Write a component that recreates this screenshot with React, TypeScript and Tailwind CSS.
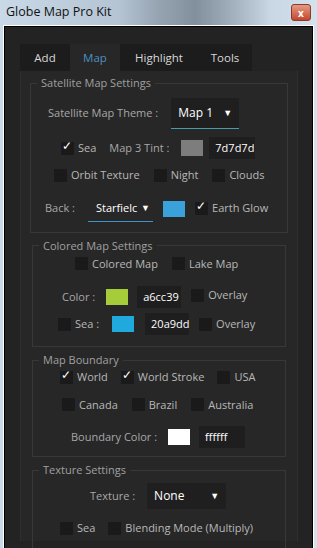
import React from "react";

const font = { fontFamily: '"Open Sans", "Noto Sans", sans-serif' };

function Check({ on = false }: { on?: boolean }) {
    return (
        <span className="relative inline-flex h-[13px] w-[13px] shrink-0 items-center justify-center bg-[#1a1a1a]">
            {on && <span className="absolute -top-[2px] left-[1px] text-[12px] leading-none text-white">✓</span>}
        </span>
    );
}

function Item({ on, label, className = "" }: { on?: boolean; label: string; className?: string }) {
    return (
        <span className={`flex items-center gap-[4px] ${className}`}>
            <Check on={on} />
            <span className="text-[#b8b8b8]">{label}</span>
        </span>
    );
}

function Swatch({ color, className = "" }: { color: string; className?: string }) {
    return <span className={`block h-[16px] w-[22px] shrink-0 ${className}`} style={{ background: color }} />;
}

function HexBox({ value, className = "" }: { value: string; className?: string }) {
    return (
        <span className={`flex h-[22px] items-center bg-[#1e1e1e] px-[6px] text-white ${className}`}>{value}</span>
    );
}

function Group({ title, children, className = "" }: { title: string; children: React.ReactNode; className?: string }) {
    return (
        <fieldset className={`border border-[#383838] px-0 pt-0 ${className}`}>
            <legend className="ml-[6px] px-[4px] text-[11px] leading-[14px] text-[#a0a0a0]">{title}</legend>
            {children}
        </fieldset>
    );
}

export default function App() {
    return (
        <div className="h-[548px] w-[317px] overflow-hidden bg-gradient-to-r from-[#c9d9e8] via-[#aebdcc] to-[#d4e2ee] text-[11px]" style={font}>
            {/* barra de título */}
            <div className="relative flex h-[25px] items-center px-[6px]">
                <div className="absolute left-[120px] top-0 h-[25px] w-[150px] bg-gradient-to-r from-transparent via-[#5f6b77] to-transparent opacity-60" />
                <span className="relative text-[12.5px] text-[#111]">Globe Map Pro Kit</span>
                <span className="relative ml-auto flex h-[17px] w-[20px] items-center justify-center rounded-[3px] border border-[#8a3a2a] bg-gradient-to-b from-[#e59a83] to-[#c2452c] text-[10px] font-bold leading-none text-white">
                    x
                </span>
            </div>

            {/* marco */}
            <div className="mx-[3px] h-[523px] border-x border-t border-white">
                <div className="h-full border-x border-t border-black bg-[#232323] pl-[15px] pr-[14px] pt-[17px]">
                    {/* pestañas */}
                    <div className="flex h-[27px] items-stretch text-[11.5px]">
                        <div className="flex w-[50px] items-center justify-center bg-[#1c1c1c] text-[#d8d8d8]">Add</div>
                        <div className="flex w-[50px] items-center justify-center bg-[#272727] text-[#4d8fc2]">Map</div>
                        <div className="flex w-[78px] items-center justify-center bg-[#1c1c1c] text-[#d8d8d8]">Highlight</div>
                        <div className="flex w-[54px] items-center justify-center bg-[#1c1c1c] text-[#d8d8d8]">Tools</div>
                    </div>

                    {/* contenido */}
                    <div className="h-[470px] border-x border-[#2f2f2f] bg-[#272727] px-[9px] pt-[5px]">
                        <Group title="Satellite Map Settings" className="pb-[10px]">
                            <div className="mt-[8px] flex items-center pl-[17px]">
                                <span className="text-[#a8a8a8]">Satellite Map Theme :</span>
                                <span className="ml-[13px] flex h-[31px] w-[68px] items-center justify-between border-b border-[#4a9aa8] bg-[#1f1f1f] pl-[7px] pr-[7px] text-[12px] text-white">
                                    Map 1 <span className="text-[9px]">▼</span>
                                </span>
                            </div>
                            <div className="mt-[8px] flex items-center pl-[30px]">
                                <Item on label="Sea" />
                                <span className="ml-[13px] text-[#a8a8a8]">Map 3 Tint :</span>
                                <Swatch color="#7d7d7d" className="ml-[12px]" />
                                <HexBox value="7d7d7d" className="ml-[6px] w-[46px]" />
                            </div>
                            <div className="mt-[8px] flex items-center pl-[23px]">
                                <Item label="Orbit Texture" />
                                <Item label="Night" className="ml-[14px]" />
                                <Item label="Clouds" className="ml-[14px]" />
                            </div>
                            <div className="mt-[12px] flex items-center pl-[14px]">
                                <span className="text-[#a8a8a8]">Back :</span>
                                <span className="ml-[13px] flex h-[26px] w-[65px] items-center justify-between overflow-hidden whitespace-nowrap border-b border-[#3f93c8] pl-[8px] text-white">
                                    Starfielc<span className="pr-[3px] text-[9px]">▼</span>
                                </span>
                                <Swatch color="#3aa2da" className="ml-[10px]" />
                                <Item on label="Earth Glow" className="ml-[10px]" />
                            </div>
                        </Group>

                        <Group title="Colored Map Settings" className="mx-[2px] mt-[6px] pb-[11px]">
                            <div className="mt-[3px] flex items-center pl-[42px]">
                                <Item label="Colored Map" />
                                <Item label="Lake Map" className="ml-[14px]" />
                            </div>
                            <div className="mt-[14px] flex items-center pl-[29px]">
                                <span className="text-[#a8a8a8]">Color :</span>
                                <Swatch color="#a6cc39" className="ml-[11px]" />
                                <HexBox value="a6cc39" className="ml-[9px] w-[44px]" />
                                <Item label="Overlay" className="-mt-[4px] ml-[10px]" />
                            </div>
                            <div className="mt-[5px] flex items-center pl-[25px]">
                                <Item label="Sea :" />
                                <Swatch color="#20a9dd" className="ml-[13px]" />
                                <HexBox value="20a9dd" className="ml-[11px] w-[44px]" />
                                <Item label="Overlay" className="ml-[10px]" />
                            </div>
                        </Group>

                        <Group title="Map Boundary" className="mx-[2px] mt-[6px] pb-[8px]">
                            <div className="mt-[2px] flex items-center pl-[27px]">
                                <Item on label="World" />
                                <Item on label="World Stroke" className="ml-[13px]" />
                                <Item label="USA" className="ml-[13px]" />
                            </div>
                            <div className="mt-[11px] flex items-center pl-[29px]">
                                <Item label="Canada" />
                                <Item label="Brazil" className="ml-[14px]" />
                                <Item label="Australia" className="ml-[14px]" />
                            </div>
                            <div className="mt-[13px] flex items-center pl-[38px]">
                                <span className="text-[#a8a8a8]">Boundary Color :</span>
                                <Swatch color="#ffffff" className="ml-[11px]" />
                                <HexBox value="ffffff" className="ml-[9px] w-[46px]" />
                            </div>
                        </Group>

                        <Group title="Texture Settings" className="mx-[2px] mt-[6px] pb-[20px]">
                            <div className="mt-[6px] flex items-center pl-[57px]">
                                <span className="text-[#a8a8a8]">Texture :</span>
                                <span className="ml-[12px] flex h-[26px] w-[79px] items-center justify-between bg-[#1f1f1f] pl-[7px] pr-[7px] text-[12px] text-white">
                                    None <span className="text-[9px]">▼</span>
                                </span>
                            </div>
                            <div className="mt-[11px] flex items-center pl-[27px]">
                                <Item label="Sea" />
                                <Item label="Blending Mode (Multiply)" className="ml-[13px]" />
                            </div>
                        </Group>
                    </div>
                </div>
            </div>
        </div>
    );
}
